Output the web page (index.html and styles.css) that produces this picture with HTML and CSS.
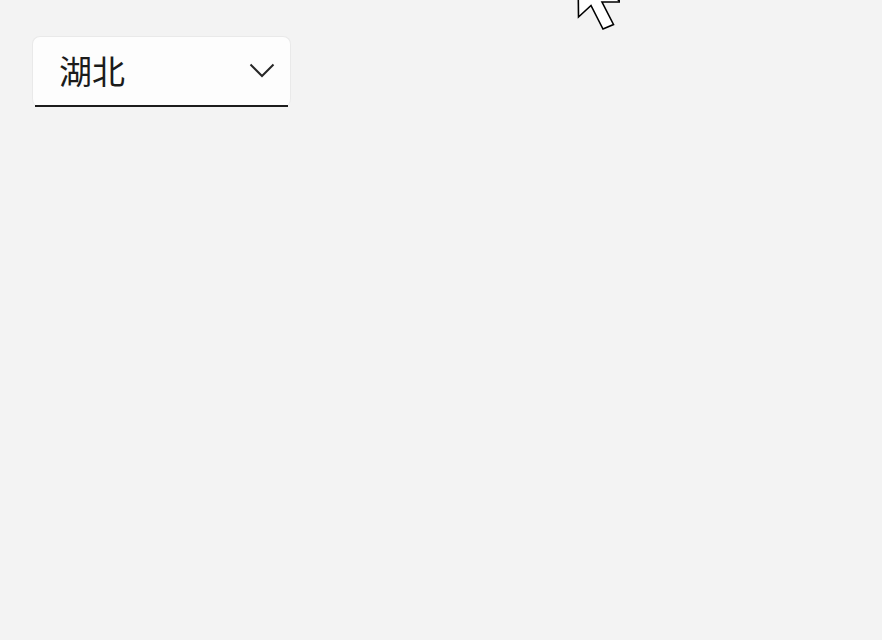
FILE: index.html
```html
<!DOCTYPE html>
<html lang="zh-CN">
<head>
    <meta charset="UTF-8">
    <meta name="viewport" content="width=device-width, initial-scale=1.0">
    <title>ComboBox</title>
    <link rel="stylesheet" href="styles.css">
</head>
<body>
    <div class="page">
        <!-- Province picker -->
        <div class="combo">
            <span class="combo-value">湖北</span>
            <svg class="combo-chevron" width="26" height="15" viewBox="0 0 26 15">
                <polyline points="1.5,1.5 13,13 24.5,1.5" fill="none" stroke="#262626" stroke-width="2"/>
            </svg>
        </div>
    </div>

    <!-- Mouse pointer in the capture -->
    <svg class="pointer" width="50" height="32" viewBox="0 0 50 32">
        <polygon points="8,-30 8.5,17 21,5.5 33,29 43.5,24.5 32,2 51,2" fill="#fff" stroke="#000" stroke-width="1.6" stroke-linejoin="miter"/>
    </svg>
</body>
</html>
```

FILE: styles.css
```css
body {
    margin: 0;
    background-color: #f3f3f3;
    font-family: "Noto Sans CJK SC", "Noto Sans", sans-serif;
}
.page {
    padding: 36px 32px;
}
.combo {
    position: relative;
    box-sizing: border-box;
    width: 259px;
    height: 71px;
    display: flex;
    align-items: center;
    justify-content: space-between;
    padding: 0 15px 3px 26px;
    background-color: #fdfdfd;
    border: 1px solid #e9e9e9;
    border-bottom: none;
    border-radius: 8px;
}
.combo::after {
    content: "";
    position: absolute;
    left: 2px;
    right: 2px;
    bottom: 0;
    height: 2px;
    background-color: #1c1c1c;
}
.combo-value {
    font-size: 33px;
    line-height: 1;
    color: #1b1b1b;
}
.combo-chevron {
    display: block;
}
.pointer {
    position: absolute;
    left: 570px;
    top: 0;
}
```
